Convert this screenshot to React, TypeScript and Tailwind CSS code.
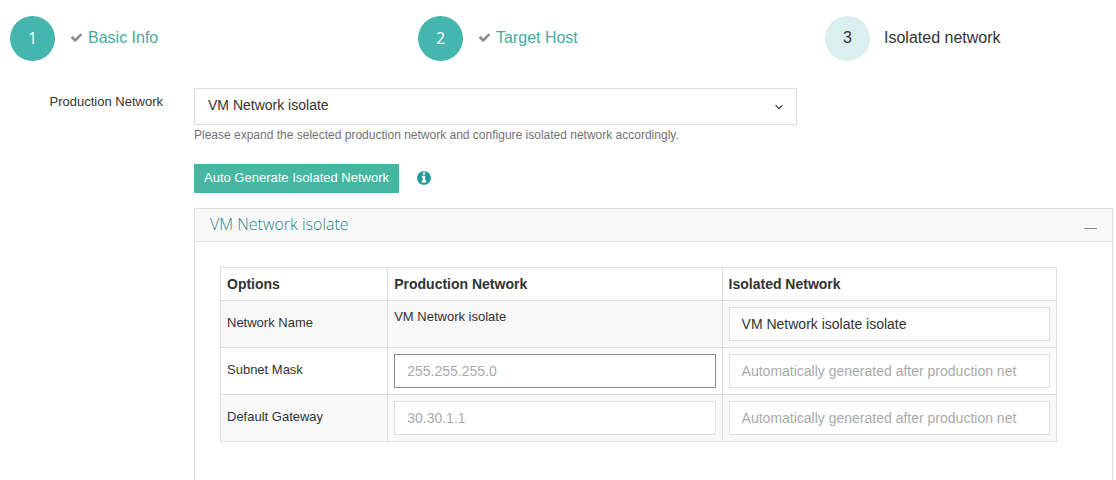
import React from "react";

type StepProps = { number: number; title: string; done?: boolean };

function CheckIcon() {
  return (
    <svg viewBox="0 0 1792 1792" className="size-[13px] shrink-0 fill-[#8e8e8e]" aria-hidden="true">
      <path d="M1671 566q0 40-28 68l-724 724-136 136q-28 28-68 28t-68-28l-136-136-362-362q-28-28-28-68t28-68l136-136q28-28 68-28t68 28l294 295 656-657q28-28 68-28t68 28l136 136q28 28 28 68z" />
    </svg>
  );
}

function InfoIcon() {
  return (
    <svg viewBox="0 0 1792 1792" className="size-4 fill-[#219c98]" aria-hidden="true">
      <path d="M1152 1376v-160q0-14-9-23t-23-9h-96v-512q0-14-9-23t-23-9h-320q-14 0-23 9t-9 23v160q0 14 9 23t23 9h96v320h-96q-14 0-23 9t-9 23v160q0 14 9 23t23 9h448q14 0 23-9t9-23zm-128-896v-160q0-14-9-23t-23-9h-192q-14 0-23 9t-9 23v160q0 14 9 23t23 9h192q14 0 23-9t9-23zm640 416q0 209-103 385.5t-279.5 279.5-385.5 103-385.5-103-279.5-279.5-103-385.5 103-385.5 279.5-279.5 385.5-103 385.5 103 279.5 279.5 103 385.5z" />
    </svg>
  );
}

function Step({ number, title, done = false }: StepProps) {
  return (
    <li>
      <a href={`#step-${number}`} className="flex items-center" aria-current={done ? undefined : "step"}>
        <span
          className={
            done
              ? "flex size-[45px] items-center justify-center rounded-full bg-[#44b6ae] pb-[2px] font-['Open_Sans','Liberation_Sans',sans-serif] text-base text-white"
              : "flex size-[45px] items-center justify-center rounded-full bg-[#daf0ee] pb-[2px] text-base text-[#333]"
          }
        >
          {number}
        </span>
        {done ? (
          <span className="ml-[15px] flex items-center gap-[5px] pb-[2px] text-base text-[#45ac9f]">
            <CheckIcon />
            {title}
          </span>
        ) : (
          <span className="ml-[14px] pb-[2px] text-base text-[#333]">{title}</span>
        )}
      </a>
    </li>
  );
}

type FieldProps = { label: string; value?: string; placeholder?: string; strong?: boolean };

function Field({ label, value, placeholder, strong = false }: FieldProps) {
  return (
    <input
      type="text"
      aria-label={label}
      defaultValue={value}
      placeholder={placeholder}
      className={
        strong
          ? "block h-[34px] w-full border border-[#8c8c8c] bg-white px-3 text-sm text-[#333] outline-none placeholder:text-[#aaa]"
          : "block h-[34px] w-full border border-[#e0e0e0] bg-white px-3 text-sm text-[#333] outline-none placeholder:text-[#aaa]"
      }
    />
  );
}

const cell = "border border-[#ddd] p-[6px]";
const headCell = "border border-[#ddd] px-[6px] py-[6px] text-left text-sm font-bold";
const rowHead = "border border-[#ddd] px-[6px] pb-[2px] text-left font-normal";
const generated = "Automatically generated after production net";

export default function App() {
  return (
    <main className="min-h-screen bg-white pt-4 font-['Liberation_Sans',Arial,sans-serif] text-[13px] leading-5 text-[#333]">
      <ol className="grid grid-cols-[408fr_407fr_291fr] pl-[10px]">
        <Step number={1} title="Basic Info" done />
        <Step number={2} title="Target Host" done />
        <Step number={3} title="Isolated network" />
      </ol>

      <form className="mt-[27px] grid grid-cols-[163px_1fr] gap-x-[31px] pr-[3px]">
        <label htmlFor="production-network" className="pt-[4px] text-right">
          Production Network
        </label>
        <div className="min-w-0">
          <div className="grid w-[65.6%]">
            <select
              id="production-network"
              className="col-start-1 row-start-1 h-[37px] w-full appearance-none border border-[#ddd] bg-white pr-8 pb-[3px] pl-[13px] text-sm text-[#333] outline-none"
            >
              <option>VM Network isolate</option>
            </select>
            <svg
              viewBox="0 0 10 6"
              className="pointer-events-none col-start-1 row-start-1 mr-[13px] h-[6px] w-[10px] self-center justify-self-end fill-none stroke-[#333]"
              aria-hidden="true"
            >
              <path d="M1.5 1.2 5 4.7 8.5 1.2" strokeWidth="1.1" />
            </svg>
          </div>
          <p className="text-xs leading-5 text-[#737373]">
            Please expand the selected production network and configure isolated network accordingly.
          </p>

          <div className="mt-[19px] flex items-center gap-[17px]">
            <button type="button" className="h-[29px] bg-[#45b6a0] px-[10px] pb-[2px] text-[13px] text-white">
              Auto Generate Isolated Network
            </button>
            <button type="button" aria-label="About automatic generation" className="pb-[2px]">
              <InfoIcon />
            </button>
          </div>

          <section className="mt-[15px] border border-[#ddd] pb-12">
            <header className="flex h-[33px] items-center justify-between border-b border-[#ddd] bg-[#f8f8f8] pr-[15px] pl-[15px]">
              <h2 className="pb-[2px] font-['Open_Sans','Liberation_Sans',sans-serif] text-base font-light text-[#2b8582]">
                VM Network isolate
              </h2>
              <button type="button" aria-label="Collapse" className="pt-[6px]">
                <span className="block h-px w-[13px] bg-[#8c8c8c]" />
              </button>
            </header>
            <div className="pt-[25px] pr-[55px] pl-[25px]">
              <table className="w-full table-fixed border-collapse">
                <colgroup>
                  <col className="w-1/5" />
                  <col className="w-2/5" />
                  <col className="w-2/5" />
                </colgroup>
                <thead>
                  <tr>
                    <th scope="col" className={headCell}>Options</th>
                    <th scope="col" className={headCell}>Production Network</th>
                    <th scope="col" className={headCell}>Isolated Network</th>
                  </tr>
                </thead>
                <tbody>
                  <tr className="bg-[#f8f8f8]">
                    <th scope="row" className={rowHead}>Network Name</th>
                    <td className="border border-[#ddd] p-[6px] align-top">VM Network isolate</td>
                    <td className={cell}>
                      <Field label="Isolated network name" value="VM Network isolate isolate" />
                    </td>
                  </tr>
                  <tr>
                    <th scope="row" className={rowHead}>Subnet Mask</th>
                    <td className={cell}>
                      <Field label="Production subnet mask" placeholder="255.255.255.0" strong />
                    </td>
                    <td className={cell}>
                      <Field label="Isolated subnet mask" placeholder={generated} />
                    </td>
                  </tr>
                  <tr className="bg-[#f8f8f8]">
                    <th scope="row" className={rowHead}>Default Gateway</th>
                    <td className={cell}>
                      <Field label="Production default gateway" placeholder="30.30.1.1" />
                    </td>
                    <td className={cell}>
                      <Field label="Isolated default gateway" placeholder={generated} />
                    </td>
                  </tr>
                </tbody>
              </table>
            </div>
          </section>
        </div>
      </form>
    </main>
  );
}
